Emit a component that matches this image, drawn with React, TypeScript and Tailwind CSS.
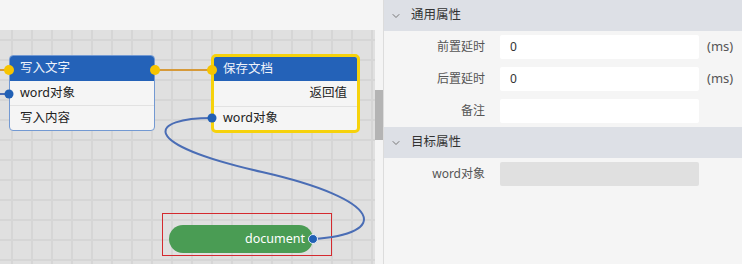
import { ChevronDown } from 'lucide-react';

const FONT = "font-['Noto_Sans','Noto_Sans_CJK_SC',sans-serif]";

function PropRow({ label, value, unit, disabled }: { label: string; value?: string; unit?: string; disabled?: boolean }) {
  return (
    <div className="flex h-[32px] items-center">
      <div className="w-[102px] pr-[1px] text-right text-[12px] text-[#555]">{label}</div>
      <div
        className={
          disabled
            ? 'ml-[14px] h-[24px] w-[199px] rounded-[2px] bg-[#e0e0e0]'
            : 'ml-[14px] flex h-[24px] w-[199px] items-center rounded-[2px] bg-white pl-[10px] text-[12px] text-[#333]'
        }
      >
        {value}
      </div>
      {unit && <span className="ml-[8px] text-[13px] text-[#555]">{unit}</span>}
    </div>
  );
}

function SectionHeader({ title }: { title: string }) {
  return (
    <div className="flex h-[31px] items-center bg-[#dde0e6] pl-[6px] text-[12.5px] text-[#333]">
      <ChevronDown size={12} strokeWidth={2} className="text-[#777]" />
      <span className="ml-[9px]">{title}</span>
    </div>
  );
}

export default function App() {
  return (
    <div className={`flex h-[264px] w-[742px] overflow-hidden bg-[#f5f5f5] ${FONT}`}>
      <div className="flex w-[383px] flex-col">
        <div className="h-[30px] bg-[#f5f5f5]" />
        <div className="flex flex-1">
          <div className="relative w-[375px] overflow-hidden bg-[#e0e0e0] bg-[linear-gradient(to_right,#d6d6d6_2px,transparent_2px),linear-gradient(to_bottom,#d6d6d6_2px,transparent_2px)] bg-[size:20px_20px] bg-[position:11px_9px]">
            {/* node: 写入文字 */}
            <div className="absolute left-[9px] top-[25px] w-[146px] overflow-hidden rounded-[4px] border-[1.5px] border-[#7399d2] bg-[#f5f5f5]">
              <div className="flex h-[25px] items-center bg-[#2462b8] pl-[10px] text-[12.5px] text-[#eef2fa]">写入文字</div>
              <div className="flex h-[25px] items-center border-b border-[#e2e2e2] pl-[10px] text-[12.5px] text-[#222]">word对象</div>
              <div className="flex h-[24px] items-center pl-[10px] text-[12.5px] text-[#222]">写入内容</div>
            </div>
            {/* node: 保存文档 */}
            <div className="absolute left-[211px] top-[24px] w-[149px] overflow-hidden rounded-[5px] border-[3px] border-[#f6d20c] bg-[#f5f5f5]">
              <div className="flex h-[24px] items-center bg-[#2462b8] pl-[9px] text-[12.5px] text-[#eef2fa]">保存文档</div>
              <div className="flex h-[26px] items-center justify-end border-b border-[#e2e2e2] pr-[10px] text-[12.5px] text-[#222]">返回值</div>
              <div className="flex h-[23px] items-center pl-[9px] text-[12.5px] text-[#222]">word对象</div>
            </div>
            {/* variable node */}
            <div className="absolute left-[162px] top-[183px] h-[43px] w-[170px] border border-[#d42a2f]" />
            <div className="absolute left-[169px] top-[195px] flex h-[28px] w-[144px] items-center justify-end rounded-full bg-[#4a9c54] pr-[8px] text-[12.5px] text-white">
              document
            </div>
            <svg className="absolute left-0 top-0" width="375" height="234" viewBox="0 0 375 234">
              <path d="M0 40 L9 40 M155 40 L212 40" stroke="#d69a3a" strokeWidth="2" fill="none" />
              <path d="M0 64 L9 64" stroke="#4a6db5" strokeWidth="2" fill="none" />
              <path d="M313 209 C390 204, 385 170, 262 142 C135 113, 150 88, 212 88" stroke="#4a6db5" strokeWidth="2" fill="none" />
              <circle cx="9" cy="40" r="5" fill="#f6c400" />
              <circle cx="155" cy="40" r="5" fill="#f6c400" />
              <circle cx="212" cy="40" r="5" fill="#f6c400" />
              <circle cx="9" cy="64" r="4.5" fill="#2160b5" />
              <circle cx="212" cy="88" r="4.5" fill="#2160b5" />
              <circle cx="313" cy="209" r="4.5" fill="#2160b5" stroke="#e8eef8" strokeWidth="1" />
            </svg>
          </div>
          <div className="w-[8px] bg-[#f4f4f4] pt-[60px]">
            <div className="h-[50px] bg-[#b4b4b4]" />
          </div>
        </div>
      </div>
      <div className="flex-1 border-l border-[#dcdcdc] bg-[#f5f5f5]">
        <SectionHeader title="通用属性" />
        <div>
          <PropRow label="前置延时" value="0" unit="(ms)" />
          <PropRow label="后置延时" value="0" unit="(ms)" />
          <PropRow label="备注" />
        </div>
        <SectionHeader title="目标属性" />
        <PropRow label="word对象" disabled />
      </div>
    </div>
  );
}
